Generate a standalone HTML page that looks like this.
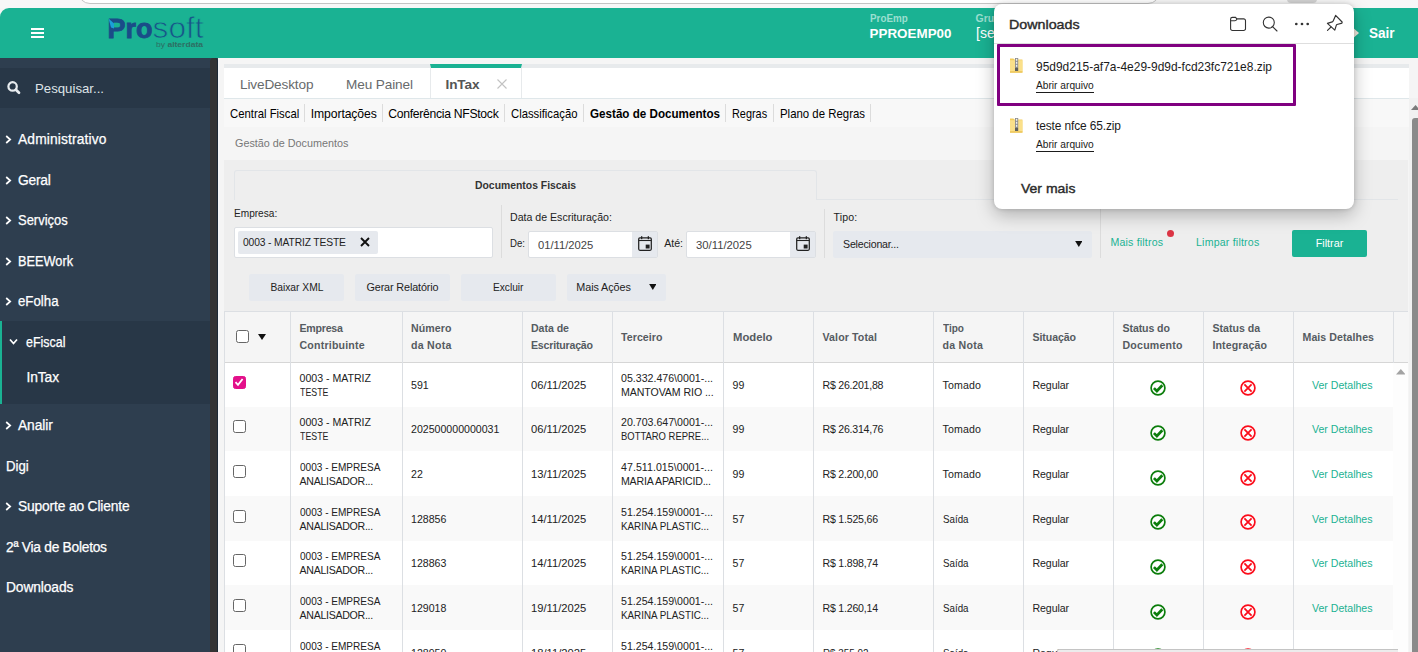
<!DOCTYPE html>
<html lang="pt-BR">
<head>
<meta charset="utf-8">
<title>Prosoft - InTax - Gestão de Documentos</title>
<style>
*{box-sizing:border-box;margin:0;padding:0}
html,body{width:1418px;height:652px;overflow:hidden;background:#f5f5f5;font-family:"Liberation Sans",Arial,sans-serif;color:#222}
.abs,.abs-all>*{position:absolute}
.t{position:absolute;white-space:nowrap;line-height:1}
#chrome{left:0;top:0;width:1418px;height:8px;background:#f7f7f7}
#urlbar{left:78px;top:-20px;width:1082px;height:24px;border:1px solid #c4c4c4;border-radius:12px;background:#fff}
#chromebtn{left:1287px;top:-10px;width:30px;height:13px;background:#d4d4d4;border-radius:4px}
#header{left:0;top:8px;width:1418px;height:50px;background:#1ab293;border-top-left-radius:9px}
#sidebar{left:0;top:58px;width:218px;height:594px;background:#2e3e4f}
#sbstrip{left:210px;top:58px;width:8px;height:594px;background:#333;border-radius:3.5px 3.5px 0 0;border-right:1px solid #1d2935}
#search{left:0;top:10px;width:210px;height:40px;background:#283747}
.mi{position:absolute;left:0;width:210px;color:#fff;font-size:13.8px;white-space:nowrap;line-height:20px;height:20px;-webkit-text-stroke:0.25px #fff}
.mi svg{position:absolute;left:5px;top:6px;width:7px;height:9px}
.mi span{position:absolute;left:18px;top:0.5px}
.mi.nc span{left:6px}
#efiscal{left:0;top:263px;width:210px;height:83px;background:#283747;border-left:2.5px solid #1ab293}
</style>
</head>
<body>
<div id="chrome" class="abs"><div id="urlbar" class="abs"></div><div id="chromebtn" class="abs"></div></div>

<div id="header" class="abs">
  <svg class="abs" style="left:31px;top:20px" width="13" height="10" viewBox="0 0 13 10"><rect x="0" y="0" width="13" height="2" fill="#fff"/><rect x="0" y="4" width="13" height="2" fill="#fff"/><rect x="0" y="8" width="13" height="2" fill="#fff"/></svg>
  <!-- logo -->
  <svg class="abs" style="left:100px;top:4px" width="120" height="42" viewBox="0 0 120 42">
    <text x="7.6" y="26" font-family="Liberation Sans, Arial, sans-serif" font-size="28" font-weight="700" fill="#1a4c88" stroke="#1a4c88" stroke-width="0.9" textLength="45" lengthAdjust="spacingAndGlyphs">Pro</text>
    <text x="52.6" y="26" font-family="Liberation Sans, Arial, sans-serif" font-size="29" font-weight="400" fill="#17568a" stroke="#1ab293" stroke-width="0.75" textLength="51" lengthAdjust="spacingAndGlyphs">soft</text>
    <polygon points="8.6,6.5 14,11.5 14,16.6 11,15.4" fill="#1b9fd8"/>
    <text x="56" y="34.6" font-family="Liberation Sans, Arial, sans-serif" font-size="7.6" fill="#2e6e63" textLength="47" lengthAdjust="spacingAndGlyphs">by <tspan font-weight="700">alterdata</tspan></text>
  </svg>
  <div class="t" style="left:869.5px;top:5.3px;font-size:10.5px;font-weight:700;color:#9adfd0;transform:scaleX(0.936);transform-origin:0 50%">ProEmp</div>
  <div class="t" style="left:869.5px;top:19px;font-size:13.4px;font-weight:700;color:#fff;letter-spacing:0.02px">PPROEMP00</div>
  <div class="t" style="left:975.5px;top:5.3px;font-size:10.5px;font-weight:700;color:#9adfd0">Grupo</div>
  <div class="t" style="left:976px;top:18px;font-size:14px;color:#fff">[sem grupo]</div>
  <svg class="abs" style="left:1349px;top:18px" width="10" height="14" viewBox="0 0 10 14"><polygon points="2,0 10,7 2,14" fill="#f3ece0"/></svg>
  <div class="t" style="left:1369.3px;top:18px;font-size:14.5px;font-weight:700;color:#fff;transform:scaleX(0.934);transform-origin:0 50%">Sair</div>
</div>

<div id="sidebar" class="abs">
  <div id="search" class="abs">
    <svg class="abs" style="left:7px;top:13px" width="14" height="14" viewBox="0 0 14 14"><circle cx="5.6" cy="5.4" r="4.2" fill="none" stroke="#e8ecef" stroke-width="2.2"/><line x1="8.9" y1="8.7" x2="12" y2="11.8" stroke="#e8ecef" stroke-width="2.7" stroke-linecap="round"/></svg>
    <div class="t" style="left:35px;top:13.8px;font-size:13.2px;color:#dfe4e8;letter-spacing:0.01px">Pesquisar...</div>
  </div>
  <div class="mi" style="top:71px"><svg viewBox="0 0 7 9"><polyline points="1.2,1 5.2,4.5 1.2,8" fill="none" stroke="#fff" stroke-width="1.7"/></svg><span style="letter-spacing:0.14px">Administrativo</span></div>
  <div class="mi" style="top:112px"><svg viewBox="0 0 7 9"><polyline points="1.2,1 5.2,4.5 1.2,8" fill="none" stroke="#fff" stroke-width="1.7"/></svg><span style="letter-spacing:-0.26px">Geral</span></div>
  <div class="mi" style="top:152px"><svg viewBox="0 0 7 9"><polyline points="1.2,1 5.2,4.5 1.2,8" fill="none" stroke="#fff" stroke-width="1.7"/></svg><span style="transform:scaleX(0.939);transform-origin:0 50%">Serviços</span></div>
  <div class="mi" style="top:193px"><svg viewBox="0 0 7 9"><polyline points="1.2,1 5.2,4.5 1.2,8" fill="none" stroke="#fff" stroke-width="1.7"/></svg><span style="transform:scaleX(0.924);transform-origin:0 50%">BEEWork</span></div>
  <div class="mi" style="top:233px"><svg viewBox="0 0 7 9"><polyline points="1.2,1 5.2,4.5 1.2,8" fill="none" stroke="#fff" stroke-width="1.7"/></svg><span style="transform:scaleX(0.960);transform-origin:0 50%">eFolha</span></div>
  <div id="efiscal" class="abs">
    <div class="mi" style="top:11px;left:-2.5px"><svg style="left:9px;top:6px;width:9px;height:8px" viewBox="0 0 9 8"><polyline points="1,1.5 4.5,5.5 8,1.5" fill="none" stroke="#fff" stroke-width="1.7"/></svg><span style="left:26.2px;transform:scaleX(0.904);transform-origin:0 50%">eFiscal</span></div>
    <div class="mi" style="top:46px;left:-2.5px"><span style="left:27px;font-size:13.8px;letter-spacing:-0.10px">InTax</span></div>
  </div>
  <div class="mi" style="top:357px"><svg viewBox="0 0 7 9"><polyline points="1.2,1 5.2,4.5 1.2,8" fill="none" stroke="#fff" stroke-width="1.7"/></svg><span style="letter-spacing:-0.10px">Analir</span></div>
  <div class="mi nc" style="top:398px"><span style="transform:scaleX(0.959);transform-origin:0 50%">Digi</span></div>
  <div class="mi" style="top:438px"><svg viewBox="0 0 7 9"><polyline points="1.2,1 5.2,4.5 1.2,8" fill="none" stroke="#fff" stroke-width="1.7"/></svg><span style="letter-spacing:-0.16px">Suporte ao Cliente</span></div>
  <div class="mi nc" style="top:479px"><span style="letter-spacing:-0.27px">2ª Via de Boletos</span></div>
  <div class="mi nc" style="top:519px"><span style="letter-spacing:-0.11px">Downloads</span></div>
</div>
<div id="sbstrip" class="abs"></div>


<style>
#main{left:218px;top:58px;width:1200px;height:594px;background:#f5f5f5}
#tabstrip{left:6px;top:6px;width:1185px;height:4px;background:#e7eaec}
#tabbar{left:6px;top:10px;width:1185px;height:30px;background:#fff}
#acttab{left:205.5px;top:-4px;width:92px;height:34px;background:#fff;border-top:4px solid #1ab293;border-left:1px solid #e7eaec;border-right:1px solid #e7eaec}
#submenu{left:6px;top:40px;width:1185px;height:29px;background:#f8f8f8;border-top:1px solid #dfe7ea}
.sm{position:absolute;top:8px;font-size:12.2px;color:#000;white-space:nowrap;line-height:14px}
.sep{position:absolute;top:5px;width:1px;height:18px;background:#dcdcdc}
#crumb{left:6px;top:69px;width:1185px;height:32px;background:#f5f5f5}
#panel{left:6px;top:101px;width:1184px;height:493px;background:#eeeeee}
</style>
<div id="main" class="abs">
  <div id="tabstrip" class="abs"></div>
  <div id="tabbar" class="abs">
    <div class="t" style="left:16px;top:10px;font-size:13.6px;color:#676a6c;letter-spacing:-0.13px">LiveDesktop</div>
    <div class="t" style="left:122px;top:10px;font-size:13.6px;color:#676a6c;letter-spacing:-0.11px">Meu Painel</div>
    <div id="acttab" class="abs">
      <div class="t" style="left:15px;top:10px;font-size:13.6px;font-weight:700;color:#555;letter-spacing:-0.12px">InTax</div>
      <svg class="abs" style="left:66px;top:11px" width="10" height="10" viewBox="0 0 10 10"><path d="M0.5 0.5L9.5 9.5M9.5 0.5L0.5 9.5" stroke="#c2c2c2" stroke-width="1.1" fill="none"/></svg>
    </div>
  </div>
  <div id="submenu" class="abs">
    <div class="sm" style="left:5.5px;transform:scaleX(0.929);transform-origin:0 50%">Central Fiscal</div><div class="sep" style="left:80px"></div>
    <div class="sm" style="left:86.8px;letter-spacing:-0.11px">Importações</div><div class="sep" style="left:158px"></div>
    <div class="sm" style="left:164.3px;letter-spacing:-0.30px">Conferência NFStock</div><div class="sep" style="left:280px"></div>
    <div class="sm" style="left:286.7px;transform:scaleX(0.926);transform-origin:0 50%">Classificação</div><div class="sep" style="left:359.4px"></div>
    <div class="sm" style="left:365.8px;font-weight:700;transform:scaleX(0.955);transform-origin:0 50%">Gestão de Documentos</div><div class="sep" style="left:501.4px"></div>
    <div class="sm" style="left:508.1px;transform:scaleX(0.893);transform-origin:0 50%">Regras</div><div class="sep" style="left:549px"></div>
    <div class="sm" style="left:555.5px;transform:scaleX(0.936);transform-origin:0 50%">Plano de Regras</div><div class="sep" style="left:646.4px"></div>
  </div>
  <div id="crumb" class="abs"><div class="t" style="left:11px;top:11px;font-size:10.8px;color:#777">Gestão de Documentos</div></div>
  <div id="panel" class="abs">
    <div class="abs" style="left:0;top:0;width:1184px;height:1px;background:#f5f5f5"></div>

<style>
#panel .lbl{position:absolute;white-space:nowrap;font-size:10.6px;color:#222;line-height:1}
.inp{position:absolute;background:#fff;border:1px solid #dcdfe3;border-radius:2px}
.vdiv{position:absolute;width:1px;background:#dcdcdc}
.btn{position:absolute;top:115px;height:27px;background:#e6e9ee;border-radius:2px;font-size:10.8px;color:#222;text-align:center;line-height:27px;white-space:nowrap}
.btn span{display:inline-block}
.calb{position:absolute;right:0;top:0;width:25px;height:100%;background:#e6e9ee}
</style>
    <!-- inner tab -->
    <div class="abs" style="left:10px;top:11px;width:583px;height:30px;border:1px solid #e2e5e8;border-bottom:none;border-radius:3px 3px 0 0"></div>
    <div class="abs" style="left:592px;top:40px;width:582px;height:1px;background:#e2e5e8"></div>
    <div class="t" style="left:251px;top:22px;font-size:10.4px;font-weight:700;color:#333">Documentos Fiscais</div>
    <!-- empresa -->
    <div class="lbl" style="left:10px;top:49px;transform:scaleX(0.953);transform-origin:0 50%">Empresa:</div>
    <div class="inp" style="left:10px;top:68px;width:259px;height:31px">
      <div class="abs" style="left:3px;top:3px;width:140px;height:23px;background:#e6e9ee;border-radius:2px">
        <div class="t" style="left:5px;top:7px;font-size:10.3px;color:#222;letter-spacing:-0.14px">0003 - MATRIZ TESTE</div>
        <svg class="abs" style="left:122px;top:6.3px" width="10" height="10" viewBox="0 0 10 10"><path d="M1 1L9 9M9 1L1 9" stroke="#111" stroke-width="1.9" fill="none"/></svg>
      </div>
    </div>
    <div class="vdiv" style="left:277px;top:46px;height:53px"></div>
    <!-- datas -->
    <div class="lbl" style="left:286px;top:53px">Data de Escrituração:</div>
    <div class="lbl" style="left:286px;top:79px;transform:scaleX(0.909);transform-origin:0 50%">De:</div>
    <div class="inp" style="left:304px;top:72px;width:130px;height:26.5px">
      <div class="t" style="left:8.6px;top:8px;font-size:10.6px;color:#444;transform:scaleX(1.059);transform-origin:0 50%">01/11/2025</div>
      <div class="calb"><svg class="abs" style="left:6px;top:4px" width="14" height="15" viewBox="0 0 14 15"><rect x="0.7" y="1.9" width="12.6" height="12.4" rx="1.2" fill="none" stroke="#222" stroke-width="1.25"/><line x1="0.7" y1="4.5" x2="13.3" y2="4.5" stroke="#222" stroke-width="1.1"/><rect x="3" y="0.2" width="1.3" height="3" fill="#222"/><rect x="9.7" y="0.2" width="1.3" height="3" fill="#222"/><rect x="7.7" y="8.6" width="3.9" height="3.9" fill="#222"/></svg></div>
    </div>
    <div class="lbl" style="left:440.3px;top:79px;letter-spacing:-0.05px">Até:</div>
    <div class="inp" style="left:462px;top:72px;width:130px;height:26.5px">
      <div class="t" style="left:8.6px;top:8px;font-size:10.6px;color:#444;transform:scaleX(1.066);transform-origin:0 50%">30/11/2025</div>
      <div class="calb"><svg class="abs" style="left:6px;top:4px" width="14" height="15" viewBox="0 0 14 15"><rect x="0.7" y="1.9" width="12.6" height="12.4" rx="1.2" fill="none" stroke="#222" stroke-width="1.25"/><line x1="0.7" y1="4.5" x2="13.3" y2="4.5" stroke="#222" stroke-width="1.1"/><rect x="3" y="0.2" width="1.3" height="3" fill="#222"/><rect x="9.7" y="0.2" width="1.3" height="3" fill="#222"/><rect x="7.7" y="8.6" width="3.9" height="3.9" fill="#222"/></svg></div>
    </div>
    <div class="vdiv" style="left:600px;top:50px;height:49px"></div>
    <!-- tipo -->
    <div class="lbl" style="left:609.6px;top:53px;letter-spacing:0.11px">Tipo:</div>
    <div class="abs" style="left:609px;top:72px;width:259px;height:27px;background:#e6e9ee;border-radius:2px">
      <div class="t" style="left:10px;top:8px;font-size:10.6px;color:#222;letter-spacing:-0.19px">Selecionar...</div>
      <svg class="abs" style="left:241.6px;top:10.4px" width="7.6" height="6.5" viewBox="0 0 9 8"><polygon points="0,0 9,0 4.5,7.5" fill="#111"/></svg>
    </div>
    <div class="vdiv" style="left:876px;top:50px;height:49px"></div>
    <div class="t" style="left:886.5px;top:78px;font-size:10.6px;color:#1ab293;letter-spacing:0.17px">Mais filtros</div>
    <div class="abs" style="left:943.2px;top:71px;width:7px;height:7px;border-radius:50%;background:#dc3545"></div>
    <div class="t" style="left:972px;top:78px;font-size:10.6px;color:#1ab293;letter-spacing:0.20px">Limpar filtros</div>
    <div class="abs" style="left:1068px;top:71px;width:75px;height:27px;background:#1ab293;border-radius:2px;color:#fff;font-size:10.8px;text-align:center;line-height:27px">Filtrar</div>
    <!-- buttons -->
    <div class="btn" style="left:25px;width:95px"><span style="transform:scaleX(0.950);transform-origin:50% 50%">Baixar XML</span></div>
    <div class="btn" style="left:131px;width:95px"><span style="letter-spacing:-0.12px">Gerar Relatório</span></div>
    <div class="btn" style="left:237px;width:95px"><span style="transform:scaleX(0.944);transform-origin:50% 50%">Excluir</span></div>
    <div class="btn" style="left:343px;width:99px;text-align:left;padding-left:9.3px"><span style="letter-spacing:-0.08px">Mais Ações</span>
      <svg class="abs" style="left:81.7px;top:10.3px" width="7.6" height="6.5" viewBox="0 0 9 8"><polygon points="0,0 9,0 4.5,7.5" fill="#111"/></svg>
    </div>
<!--TABLE-START--><style>
#tbl{left:0;top:152px;width:1184px;height:341px;background:#fdfdfd;overflow:hidden}
#thead{left:0;top:0;width:1184px;height:52px;background:#f5f5f5;border-top:1px solid #dcdfe3;border-bottom:1.5px solid #d6d6d6;z-index:2}
.cb{position:absolute;width:1px;background:#dcdfe3;top:0;height:341px;z-index:3}
.th{position:absolute;font-size:10.6px;font-weight:700;color:#555b61;line-height:17px;white-space:nowrap}
.th span,.td span{display:inline-block}
.tr{position:absolute;left:0;width:1169px;height:44.7px;background:#fff}
.tr.odd{background:#f9f9f9}
.td{position:absolute;font-size:10.6px;color:#222;line-height:14px;white-space:nowrap}
.td.s{line-height:14px;top:15.5px}
.td.d{top:8.5px}
.ck{position:absolute;left:9px;width:13px;height:13px;border:1.3px solid #666;border-radius:2.5px;background:#fff}
.ck.on{background:#e3108a;border-color:#e3108a}
.lnk{color:#1ab293}
</style>
<div id="tbl" class="abs">
<div id="thead" class="abs">
<div class="ck" style="left:12px;top:17.6px"></div>
<svg class="abs" style="left:34px;top:21.6px" width="8" height="6" viewBox="0 0 8 6"><polygon points="0,0 8,0 4,6" fill="#111"/></svg>
<div class="th" style="left:75.5px;top:7.8px"><span style="letter-spacing:-0.23px">Empresa</span><br><span style="letter-spacing:0.20px">Contribuinte</span></div>
<div class="th" style="left:187px;top:7.8px"><span style="letter-spacing:0.09px">Número</span><br><span style="letter-spacing:0.27px">da Nota</span></div>
<div class="th" style="left:307px;top:7.8px"><span style="letter-spacing:-0.05px">Data de</span><br><span style="letter-spacing:-0.20px">Escrituração</span></div>
<div class="th" style="left:397px;top:17px"><span style="letter-spacing:0.07px">Terceiro</span></div>
<div class="th" style="left:508.5px;top:17px"><span style="transform:scaleX(1.065);transform-origin:0 50%">Modelo</span></div>
<div class="th" style="left:598.5px;top:17px"><span style="letter-spacing:0.11px">Valor Total</span></div>
<div class="th" style="left:718.5px;top:7.8px"><span style="transform:scaleX(0.947);transform-origin:0 50%">Tipo</span><br><span style="letter-spacing:0.27px">da Nota</span></div>
<div class="th" style="left:808.5px;top:17px"><span style="letter-spacing:-0.09px">Situação</span></div>
<div class="th" style="left:898.5px;top:7.8px"><span style="letter-spacing:-0.10px">Status do</span><br><span style="letter-spacing:0.22px">Documento</span></div>
<div class="th" style="left:988.5px;top:7.8px"><span style="letter-spacing:-0.02px">Status da</span><br><span style="letter-spacing:0.10px">Integração</span></div>
<div class="th" style="left:1078.5px;top:17px"><span style="letter-spacing:0.07px">Mais Detalhes</span></div>
</div>
<div class="tr" style="top:51.0px">
<div class="ck on" style="top:13.6px"><svg class="abs" style="left:0.3px;top:0.5px" width="10" height="10" viewBox="0 0 10 10"><polyline points="1.5,5.2 4,7.8 8.6,2" fill="none" stroke="#fff" stroke-width="1.8"/></svg></div>
<div class="td d" style="left:75.5px"><span style="letter-spacing:-0.01px">0003 - MATRIZ</span><br><span style="transform:scaleX(0.832);transform-origin:0 50%">TESTE</span></div>
<div class="td s" style="left:187px">591</div>
<div class="td s" style="left:307px"><span style="transform:scaleX(1.057);transform-origin:0 50%">06/11/2025</span></div>
<div class="td d" style="left:397px"><span style="letter-spacing:0.01px">05.332.476\0001-...</span><br><span style="letter-spacing:-0.08px">MANTOVAM RIO ...</span></div>
<div class="td s" style="left:508.5px">99</div>
<div class="td s" style="left:598.5px"><span style="letter-spacing:-0.24px">R$ 26.201,88</span></div>
<div class="td s" style="left:718.5px"><span style="letter-spacing:0.16px">Tomado</span></div>
<div class="td s" style="left:808.5px"><span style="letter-spacing:-0.10px">Regular</span></div>
<svg class="abs" style="left:926.4px;top:18.4px" width="16" height="16" viewBox="0 0 16 16"><circle cx="8" cy="8" r="6.9" fill="#fff" stroke="#0b7d0b" stroke-width="1.7"/><polyline points="3.9,8.1 6.9,11 12.3,5.3" fill="none" stroke="#0b7d0b" stroke-width="2.7"/></svg>
<svg class="abs" style="left:1016px;top:18.4px" width="16" height="16" viewBox="0 0 16 16"><circle cx="8" cy="8" r="6.9" fill="#fff" stroke="#fb0d1b" stroke-width="1.7"/><path d="M4.4 4.4L11.6 11.6M11.6 4.4L4.4 11.6" fill="none" stroke="#fb0d1b" stroke-width="1.8"/></svg>
<div class="td s lnk" style="left:1088px"><span style="letter-spacing:-0.01px">Ver Detalhes</span></div>
</div>
<div class="tr odd" style="top:95.667px">
<div class="ck" style="top:13.6px"></div>
<div class="td d" style="left:75.5px"><span style="letter-spacing:-0.01px">0003 - MATRIZ</span><br><span style="transform:scaleX(0.832);transform-origin:0 50%">TESTE</span></div>
<div class="td s" style="left:187px">202500000000031</div>
<div class="td s" style="left:307px"><span style="transform:scaleX(1.057);transform-origin:0 50%">06/11/2025</span></div>
<div class="td d" style="left:397px"><span style="letter-spacing:0.01px">20.703.647\0001-...</span><br><span style="transform:scaleX(0.892);transform-origin:0 50%">BOTTARO REPRE...</span></div>
<div class="td s" style="left:508.5px">99</div>
<div class="td s" style="left:598.5px"><span style="letter-spacing:-0.24px">R$ 26.314,76</span></div>
<div class="td s" style="left:718.5px"><span style="letter-spacing:0.16px">Tomado</span></div>
<div class="td s" style="left:808.5px"><span style="letter-spacing:-0.10px">Regular</span></div>
<svg class="abs" style="left:926.4px;top:18.4px" width="16" height="16" viewBox="0 0 16 16"><circle cx="8" cy="8" r="6.9" fill="#fff" stroke="#0b7d0b" stroke-width="1.7"/><polyline points="3.9,8.1 6.9,11 12.3,5.3" fill="none" stroke="#0b7d0b" stroke-width="2.7"/></svg>
<svg class="abs" style="left:1016px;top:18.4px" width="16" height="16" viewBox="0 0 16 16"><circle cx="8" cy="8" r="6.9" fill="#fff" stroke="#fb0d1b" stroke-width="1.7"/><path d="M4.4 4.4L11.6 11.6M11.6 4.4L4.4 11.6" fill="none" stroke="#fb0d1b" stroke-width="1.8"/></svg>
<div class="td s lnk" style="left:1088px"><span style="letter-spacing:-0.01px">Ver Detalhes</span></div>
</div>
<div class="tr" style="top:140.334px">
<div class="ck" style="top:13.6px"></div>
<div class="td d" style="left:75.5px"><span style="transform:scaleX(0.948);transform-origin:0 50%">0003 - EMPRESA</span><br><span style="letter-spacing:-0.29px">ANALISADOR...</span></div>
<div class="td s" style="left:187px">22</div>
<div class="td s" style="left:307px"><span style="transform:scaleX(1.057);transform-origin:0 50%">13/11/2025</span></div>
<div class="td d" style="left:397px"><span style="letter-spacing:0.05px">47.511.015\0001-...</span><br><span style="letter-spacing:-0.21px">MARIA APARICID...</span></div>
<div class="td s" style="left:508.5px">99</div>
<div class="td s" style="left:598.5px"><span style="letter-spacing:-0.22px">R$ 2.200,00</span></div>
<div class="td s" style="left:718.5px"><span style="letter-spacing:0.16px">Tomado</span></div>
<div class="td s" style="left:808.5px"><span style="letter-spacing:-0.10px">Regular</span></div>
<svg class="abs" style="left:926.4px;top:18.4px" width="16" height="16" viewBox="0 0 16 16"><circle cx="8" cy="8" r="6.9" fill="#fff" stroke="#0b7d0b" stroke-width="1.7"/><polyline points="3.9,8.1 6.9,11 12.3,5.3" fill="none" stroke="#0b7d0b" stroke-width="2.7"/></svg>
<svg class="abs" style="left:1016px;top:18.4px" width="16" height="16" viewBox="0 0 16 16"><circle cx="8" cy="8" r="6.9" fill="#fff" stroke="#fb0d1b" stroke-width="1.7"/><path d="M4.4 4.4L11.6 11.6M11.6 4.4L4.4 11.6" fill="none" stroke="#fb0d1b" stroke-width="1.8"/></svg>
<div class="td s lnk" style="left:1088px"><span style="letter-spacing:-0.01px">Ver Detalhes</span></div>
</div>
<div class="tr odd" style="top:185.001px">
<div class="ck" style="top:13.6px"></div>
<div class="td d" style="left:75.5px"><span style="transform:scaleX(0.948);transform-origin:0 50%">0003 - EMPRESA</span><br><span style="letter-spacing:-0.29px">ANALISADOR...</span></div>
<div class="td s" style="left:187px">128856</div>
<div class="td s" style="left:307px"><span style="transform:scaleX(1.057);transform-origin:0 50%">14/11/2025</span></div>
<div class="td d" style="left:397px"><span style="letter-spacing:0.01px">51.254.159\0001-...</span><br><span style="transform:scaleX(0.928);transform-origin:0 50%">KARINA PLASTIC...</span></div>
<div class="td s" style="left:508.5px">57</div>
<div class="td s" style="left:598.5px"><span style="letter-spacing:-0.22px">R$ 1.525,66</span></div>
<div class="td s" style="left:718.5px"><span style="transform:scaleX(0.921);transform-origin:0 50%">Saída</span></div>
<div class="td s" style="left:808.5px"><span style="letter-spacing:-0.10px">Regular</span></div>
<svg class="abs" style="left:926.4px;top:18.4px" width="16" height="16" viewBox="0 0 16 16"><circle cx="8" cy="8" r="6.9" fill="#fff" stroke="#0b7d0b" stroke-width="1.7"/><polyline points="3.9,8.1 6.9,11 12.3,5.3" fill="none" stroke="#0b7d0b" stroke-width="2.7"/></svg>
<svg class="abs" style="left:1016px;top:18.4px" width="16" height="16" viewBox="0 0 16 16"><circle cx="8" cy="8" r="6.9" fill="#fff" stroke="#fb0d1b" stroke-width="1.7"/><path d="M4.4 4.4L11.6 11.6M11.6 4.4L4.4 11.6" fill="none" stroke="#fb0d1b" stroke-width="1.8"/></svg>
<div class="td s lnk" style="left:1088px"><span style="letter-spacing:-0.01px">Ver Detalhes</span></div>
</div>
<div class="tr" style="top:229.668px">
<div class="ck" style="top:13.6px"></div>
<div class="td d" style="left:75.5px"><span style="transform:scaleX(0.948);transform-origin:0 50%">0003 - EMPRESA</span><br><span style="letter-spacing:-0.29px">ANALISADOR...</span></div>
<div class="td s" style="left:187px">128863</div>
<div class="td s" style="left:307px"><span style="transform:scaleX(1.057);transform-origin:0 50%">14/11/2025</span></div>
<div class="td d" style="left:397px"><span style="letter-spacing:0.01px">51.254.159\0001-...</span><br><span style="transform:scaleX(0.928);transform-origin:0 50%">KARINA PLASTIC...</span></div>
<div class="td s" style="left:508.5px">57</div>
<div class="td s" style="left:598.5px"><span style="letter-spacing:-0.22px">R$ 1.898,74</span></div>
<div class="td s" style="left:718.5px"><span style="transform:scaleX(0.921);transform-origin:0 50%">Saída</span></div>
<div class="td s" style="left:808.5px"><span style="letter-spacing:-0.10px">Regular</span></div>
<svg class="abs" style="left:926.4px;top:18.4px" width="16" height="16" viewBox="0 0 16 16"><circle cx="8" cy="8" r="6.9" fill="#fff" stroke="#0b7d0b" stroke-width="1.7"/><polyline points="3.9,8.1 6.9,11 12.3,5.3" fill="none" stroke="#0b7d0b" stroke-width="2.7"/></svg>
<svg class="abs" style="left:1016px;top:18.4px" width="16" height="16" viewBox="0 0 16 16"><circle cx="8" cy="8" r="6.9" fill="#fff" stroke="#fb0d1b" stroke-width="1.7"/><path d="M4.4 4.4L11.6 11.6M11.6 4.4L4.4 11.6" fill="none" stroke="#fb0d1b" stroke-width="1.8"/></svg>
<div class="td s lnk" style="left:1088px"><span style="letter-spacing:-0.01px">Ver Detalhes</span></div>
</div>
<div class="tr odd" style="top:274.33500000000004px">
<div class="ck" style="top:13.6px"></div>
<div class="td d" style="left:75.5px"><span style="transform:scaleX(0.948);transform-origin:0 50%">0003 - EMPRESA</span><br><span style="letter-spacing:-0.29px">ANALISADOR...</span></div>
<div class="td s" style="left:187px">129018</div>
<div class="td s" style="left:307px"><span style="transform:scaleX(1.057);transform-origin:0 50%">19/11/2025</span></div>
<div class="td d" style="left:397px"><span style="letter-spacing:0.01px">51.254.159\0001-...</span><br><span style="transform:scaleX(0.928);transform-origin:0 50%">KARINA PLASTIC...</span></div>
<div class="td s" style="left:508.5px">57</div>
<div class="td s" style="left:598.5px"><span style="letter-spacing:-0.22px">R$ 1.260,14</span></div>
<div class="td s" style="left:718.5px"><span style="transform:scaleX(0.921);transform-origin:0 50%">Saída</span></div>
<div class="td s" style="left:808.5px"><span style="letter-spacing:-0.10px">Regular</span></div>
<svg class="abs" style="left:926.4px;top:18.4px" width="16" height="16" viewBox="0 0 16 16"><circle cx="8" cy="8" r="6.9" fill="#fff" stroke="#0b7d0b" stroke-width="1.7"/><polyline points="3.9,8.1 6.9,11 12.3,5.3" fill="none" stroke="#0b7d0b" stroke-width="2.7"/></svg>
<svg class="abs" style="left:1016px;top:18.4px" width="16" height="16" viewBox="0 0 16 16"><circle cx="8" cy="8" r="6.9" fill="#fff" stroke="#fb0d1b" stroke-width="1.7"/><path d="M4.4 4.4L11.6 11.6M11.6 4.4L4.4 11.6" fill="none" stroke="#fb0d1b" stroke-width="1.8"/></svg>
<div class="td s lnk" style="left:1088px"><span style="letter-spacing:-0.01px">Ver Detalhes</span></div>
</div>
<div class="tr" style="top:319.002px">
<div class="ck" style="top:13.6px"></div>
<div class="td d" style="left:75.5px"><span style="transform:scaleX(0.948);transform-origin:0 50%">0003 - EMPRESA</span><br><span style="letter-spacing:-0.29px">ANALISADOR...</span></div>
<div class="td s" style="left:187px">128950</div>
<div class="td s" style="left:307px"><span style="transform:scaleX(1.057);transform-origin:0 50%">18/11/2025</span></div>
<div class="td d" style="left:397px"><span style="letter-spacing:0.01px">51.254.159\0001-...</span><br><span style="transform:scaleX(0.928);transform-origin:0 50%">KARINA PLASTIC...</span></div>
<div class="td s" style="left:508.5px">57</div>
<div class="td s" style="left:598.5px"><span style="transform:scaleX(0.931);transform-origin:0 50%">R$ 355,02</span></div>
<div class="td s" style="left:718.5px"><span style="transform:scaleX(0.921);transform-origin:0 50%">Saída</span></div>
<div class="td s" style="left:808.5px"><span style="letter-spacing:-0.10px">Regular</span></div>
<svg class="abs" style="left:926.4px;top:18.4px" width="16" height="16" viewBox="0 0 16 16"><circle cx="8" cy="8" r="6.9" fill="#fff" stroke="#0b7d0b" stroke-width="1.7"/><polyline points="3.9,8.1 6.9,11 12.3,5.3" fill="none" stroke="#0b7d0b" stroke-width="2.7"/></svg>
<svg class="abs" style="left:1016px;top:18.4px" width="16" height="16" viewBox="0 0 16 16"><circle cx="8" cy="8" r="6.9" fill="#fff" stroke="#fb0d1b" stroke-width="1.7"/><path d="M4.4 4.4L11.6 11.6M11.6 4.4L4.4 11.6" fill="none" stroke="#fb0d1b" stroke-width="1.8"/></svg>
<div class="td s lnk" style="left:1088px"><span style="letter-spacing:-0.01px">Ver Detalhes</span></div>
</div>
<div class="cb" style="left:66.0px"></div>
<div class="cb" style="left:178.0px"></div>
<div class="cb" style="left:298.0px"></div>
<div class="cb" style="left:388.0px"></div>
<div class="cb" style="left:499.0px"></div>
<div class="cb" style="left:589.0px"></div>
<div class="cb" style="left:709.0px"></div>
<div class="cb" style="left:799.0px"></div>
<div class="cb" style="left:889.0px"></div>
<div class="cb" style="left:979.0px"></div>
<div class="cb" style="left:1069.0px"></div>
<div class="cb" style="left:1168.5px;height:52px"></div>
<div class="abs" style="left:0;top:0;width:1px;height:341px;background:#dcdfe3;z-index:3"></div>
<svg class="abs" style="left:1171.8px;top:58.4px" width="9.6" height="5.5" viewBox="0 0 9.6 5.5"><polygon points="0,5.5 4.8,0 9.6,5.5" fill="#a3a3a3"/></svg>
</div><!--TABLE-END-->
  </div>
  <div class="abs" style="left:839px;top:591px;width:341px;height:3px;background:#ececec;border-top:1px solid #c4c4c4;border-left:1px solid #c4c4c4;border-top-left-radius:2px;z-index:5"></div>
  <!-- page scrollbar -->
  <div class="abs" style="left:1191px;top:40px;width:9px;height:554px;background:#f1f1f1"></div>
  <div class="abs" style="left:1194px;top:60px;width:6px;height:534px;background:#8a8a8a;border-top-left-radius:3px"></div>
  <svg class="abs" style="left:1193px;top:47px" width="7" height="5" viewBox="0 0 7 5"><polygon points="0,5 4.5,0 9,5" fill="#7a7a7a"/></svg>
</div>


<style>
#popup{left:994px;top:4px;width:360px;height:205px;background:#fff;border-radius:8px;box-shadow:0 6px 18px rgba(0,0,0,.26),0 0 4px rgba(0,0,0,.16)}
#popup .fn{position:absolute;left:42px;font-size:11.95px;color:#1b1b1b;white-space:nowrap;line-height:1}
#popup .op{position:absolute;left:42px;font-size:10.2px;color:#1b1b1b;white-space:nowrap;line-height:1;border-bottom:1px solid #1b1b1b;padding-bottom:1.2px}
</style>
<div id="popup" class="abs">
  <div class="t" style="left:15.3px;top:13.6px;font-size:13.3px;color:#2b2b2b;-webkit-text-stroke:0.4px #2b2b2b;transform:scaleX(1.073);transform-origin:0 50%">Downloads</div>
  <!-- folder -->
  <svg class="abs" style="left:235px;top:12px" width="18" height="16" viewBox="0 0 18 16"><path d="M1.6 3.2a1.8 1.8 0 0 1 1.8-1.8h3.1l1.4 1.5h6.8a1.8 1.8 0 0 1 1.8 1.8v8a1.8 1.8 0 0 1-1.8 1.8H3.4a1.8 1.8 0 0 1-1.8-1.8z" fill="none" stroke="#333" stroke-width="1.1"/><path d="M1.6 4.8h4.3c.9 0 1.6-.7 2-1.9" fill="none" stroke="#333" stroke-width="1.1"/></svg>
  <!-- search -->
  <svg class="abs" style="left:267px;top:11px" width="18" height="18" viewBox="0 0 18 18"><circle cx="7.8" cy="7.6" r="5.5" fill="none" stroke="#333" stroke-width="1.1"/><line x1="11.8" y1="11.8" x2="16" y2="16" stroke="#333" stroke-width="1.1" stroke-linecap="round"/></svg>
  <!-- dots -->
  <svg class="abs" style="left:300px;top:18px" width="16" height="4" viewBox="0 0 16 4"><circle cx="2.3" cy="2" r="1.35" fill="#333"/><circle cx="8" cy="2" r="1.35" fill="#333"/><circle cx="13.7" cy="2" r="1.35" fill="#333"/></svg>
  <!-- pin -->
  <svg class="abs" style="left:330px;top:8px" width="22" height="22" viewBox="0 0 22 22"><path d="M11.6 3.4L18.1 10Q18.4 11.1 17.2 11.4L13 12.5Q12.4 12.9 12.2 13.6L10.8 18.1L3.4 11.4L8.3 9.9Q9 9.5 9.3 8.7Z" fill="none" stroke="#333" stroke-width="1.15" stroke-linejoin="round"/><line x1="7" y1="15" x2="3.5" y2="18.4" stroke="#333" stroke-width="1.15" stroke-linecap="round"/></svg>
  <div class="abs" style="left:0;top:39px;width:360px;height:1px;background:#dedede"></div>
  <!-- item 1 -->
  <div class="abs" style="left:3px;top:40px;width:299px;height:62px;border:3px solid #800080;border-radius:1px;background:#fff"></div>
  <svg class="abs zip" style="left:16px;top:54px" width="13" height="15" viewBox="0 0 13 15"><path d="M0 0.6h3.4l1 1H12.4v12.9H0z" fill="#f3cd5c"/><rect x="0" y="2.2" width="12.4" height="12.3" fill="#fbe08a"/><rect x="0" y="13.4" width="12.4" height="1.1" fill="#e6bb49"/><rect x="5" y="0" width="3.2" height="10" fill="#8c8c8c"/><rect x="5.9" y="0.8" width="1.4" height="2" fill="#f0f0f0"/><rect x="5.9" y="3.8" width="1.4" height="2" fill="#f0f0f0"/><rect x="5.9" y="6.8" width="1.4" height="2" fill="#f0f0f0"/><rect x="5" y="10" width="3.2" height="3" fill="#5f5f5f"/></svg>
  <div class="fn" style="top:58.3px;letter-spacing:0.01px">95d9d215-af7a-4e29-9d9d-fcd23fc721e8.zip</div>
  <div class="op" style="top:76.5px">Abrir arquivo</div>
  <!-- item 2 -->
  <svg class="abs zip" style="left:16px;top:114px" width="13" height="15" viewBox="0 0 13 15"><path d="M0 0.6h3.4l1 1H12.4v12.9H0z" fill="#f3cd5c"/><rect x="0" y="2.2" width="12.4" height="12.3" fill="#fbe08a"/><rect x="0" y="13.4" width="12.4" height="1.1" fill="#e6bb49"/><rect x="5" y="0" width="3.2" height="10" fill="#8c8c8c"/><rect x="5.9" y="0.8" width="1.4" height="2" fill="#f0f0f0"/><rect x="5.9" y="3.8" width="1.4" height="2" fill="#f0f0f0"/><rect x="5.9" y="6.8" width="1.4" height="2" fill="#f0f0f0"/><rect x="5" y="10" width="3.2" height="3" fill="#5f5f5f"/></svg>
  <div class="fn" style="top:117.2px;letter-spacing:-0.12px">teste nfce 65.zip</div>
  <div class="op" style="top:135.5px">Abrir arquivo</div>
  <div class="t" style="left:27.1px;top:177.5px;font-size:13.3px;color:#2b2b2b;-webkit-text-stroke:0.4px #2b2b2b;transform:scaleX(1.052);transform-origin:0 50%">Ver mais</div>
</div>

</body>
</html>
